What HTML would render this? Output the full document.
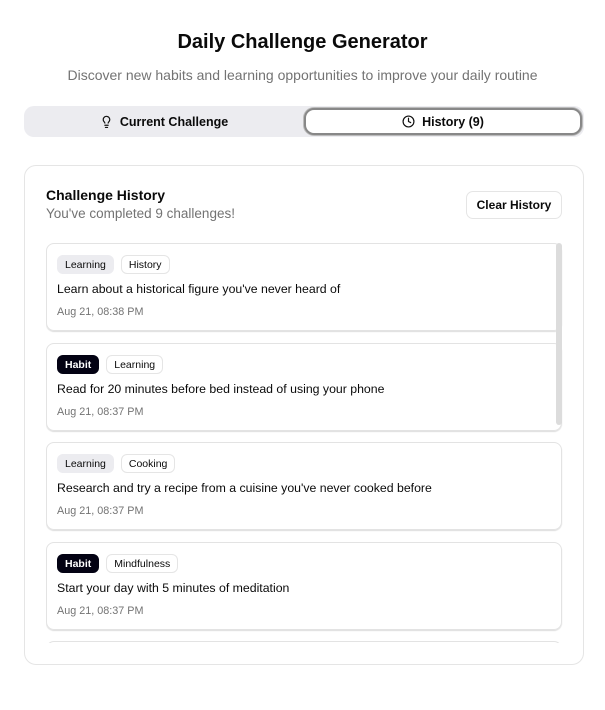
<!DOCTYPE html>
<html><head><style>
*{box-sizing:border-box;margin:0;padding:0}
body{width:605px;height:710px;background:#fff;font-family:"Liberation Sans",sans-serif;color:#0a0a0a;position:relative;overflow:hidden}
h1{position:absolute;top:31px;left:0;width:605px;text-align:center;font-size:20px;font-weight:bold}
.sub{position:absolute;top:67px;left:0;width:605px;text-align:center;font-size:14px;color:#737373}
.tabs{position:absolute;left:24px;top:106px;width:560px;height:31px;background:#ececf0;border-radius:10px}
.tab{position:absolute;top:0;height:31px;display:flex;align-items:center;justify-content:center;font-size:12.5px;font-weight:bold;gap:7px}
.t1{left:0;width:280px}
.t2{left:280px;width:278px;top:2px;height:27px;background:#fff;border:2px solid #888;border-radius:10px;box-shadow:0 0 0 1px #bbb}
.panel{position:absolute;left:24px;top:165px;width:560px;height:500px;border:1px solid #e5e5e5;border-radius:12px}
.ph{position:absolute;left:21px;top:21px;font-size:14px;font-weight:bold}
.ps{position:absolute;left:21px;top:40px;font-size:13.5px;color:#737373}
.clr{position:absolute;right:21px;top:25px;width:96px;height:28px;border:1px solid #e5e5e5;border-radius:7px;font-size:12px;font-weight:bold;display:flex;align-items:center;justify-content:center}
.list{position:absolute;left:21px;top:77px;width:517px;height:400px;overflow:hidden}
.card{position:absolute;left:0;width:516px;height:88px;border:1px solid #e3e3e3;border-radius:8px;box-shadow:0 1px 1px #ddd}
.tags{position:absolute;left:10px;top:11px;display:flex;gap:7px}
.tag{font-size:10.5px;height:19px;padding:0 7px;border-radius:6px;display:flex;align-items:center;border:1px solid #e5e5e5}
.g{background:#ececf0;border-color:#ececf0}
.b{background:#030213;color:#fff;font-weight:bold;border-color:#030213}
.txt{position:absolute;left:10px;top:38px;font-size:12.3px}
.dt{position:absolute;left:10px;top:62px;font-size:10.8px;color:#737373}
.sb{position:absolute;left:531px;top:77px;width:6px;height:182px;background:#dcdcdc;border-radius:3px}
</style></head><body>
<h1>Daily Challenge Generator</h1>
<div class="sub">Discover new habits and learning opportunities to improve your daily routine</div>
<div class="tabs">
<div class="tab t1"><svg width="13" height="14" viewBox="0 0 24 24" fill="none" stroke="#111" stroke-width="2.2" stroke-linecap="round"><path d="M9 18h6M10 22h4M15 14c.2-1 .7-1.7 1.5-2.5A6 6 0 1 0 6 8c0 1 .2 2.2 1.5 3.5.7.7 1.3 1.5 1.5 2.5"/></svg>Current Challenge</div>
<div class="tab t2"><svg width="13" height="13" viewBox="0 0 24 24" fill="none" stroke="#111" stroke-width="2.2" stroke-linecap="round"><circle cx="12" cy="12" r="10"/><path d="M12 6v6l4 2"/></svg>History (9)</div>
</div>
<div class="panel">
<div class="ph">Challenge History</div>
<div class="ps">You've completed 9 challenges!</div>
<div class="clr">Clear History</div>
<div class="list">
<div class="card" style="top:0px"><div class="tags"><span class="tag g">Learning</span><span class="tag">History</span></div><div class="txt">Learn about a historical figure you've never heard of</div><div class="dt">Aug 21, 08:38 PM</div></div>
<div class="card" style="top:100px"><div class="tags"><span class="tag b">Habit</span><span class="tag">Learning</span></div><div class="txt">Read for 20 minutes before bed instead of using your phone</div><div class="dt">Aug 21, 08:37 PM</div></div>
<div class="card" style="top:199px"><div class="tags"><span class="tag g">Learning</span><span class="tag">Cooking</span></div><div class="txt">Research and try a recipe from a cuisine you've never cooked before</div><div class="dt">Aug 21, 08:37 PM</div></div>
<div class="card" style="top:299px"><div class="tags"><span class="tag b">Habit</span><span class="tag">Mindfulness</span></div><div class="txt">Start your day with 5 minutes of meditation</div><div class="dt">Aug 21, 08:37 PM</div></div>
<div class="card" style="top:398px"></div>
</div>
<div class="sb"></div>
</div>
</body></html>
